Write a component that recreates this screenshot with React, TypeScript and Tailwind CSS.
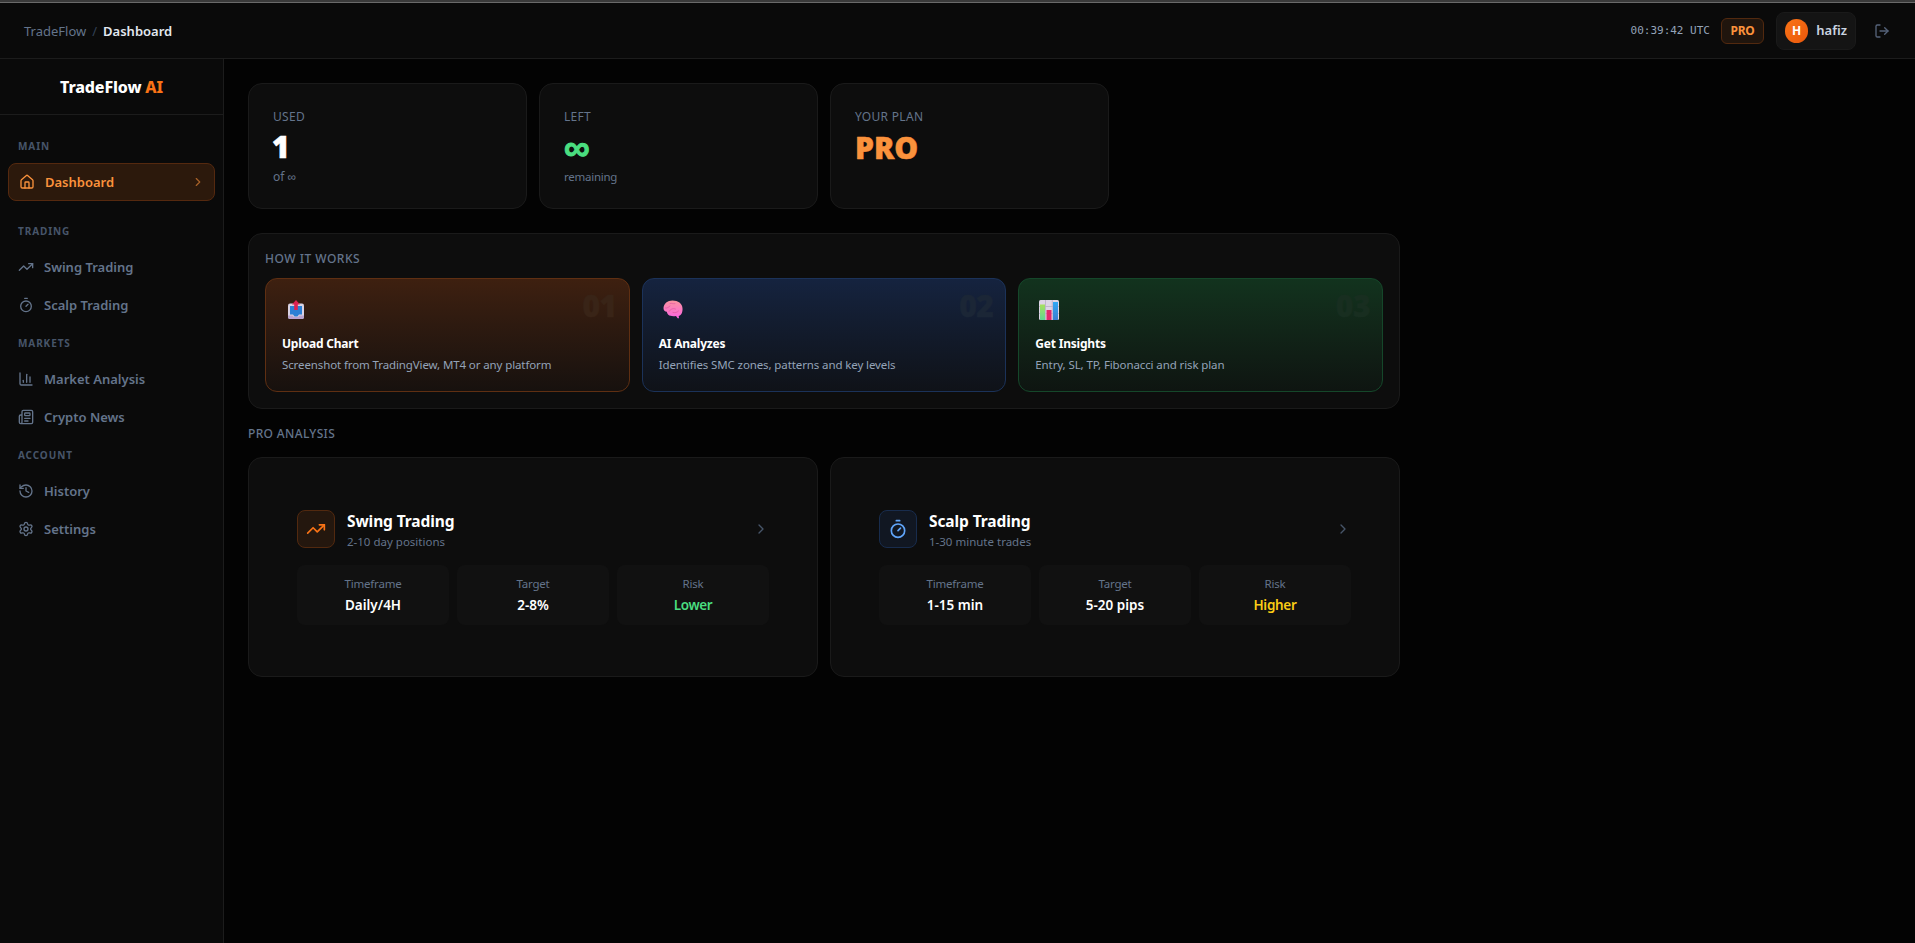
import type { ReactNode } from "react";
import {
  ChartColumn,
  ChevronRight,
  History,
  House,
  LogOut,
  Newspaper,
  Settings,
  Timer,
  TrendingUp,
  type LucideIcon,
} from "lucide-react";

type NavItem = { label: string; icon: LucideIcon; active?: boolean };

const NAV: { title: string; items: NavItem[] }[] = [
  { title: "Main", items: [{ label: "Dashboard", icon: House, active: true }] },
  {
    title: "Trading",
    items: [
      { label: "Swing Trading", icon: TrendingUp },
      { label: "Scalp Trading", icon: Timer },
    ],
  },
  {
    title: "Markets",
    items: [
      { label: "Market Analysis", icon: ChartColumn },
      { label: "Crypto News", icon: Newspaper },
    ],
  },
  {
    title: "Account",
    items: [
      { label: "History", icon: History },
      { label: "Settings", icon: Settings },
    ],
  },
];

function OutboxIcon() {
  return (
    <svg width="16" height="20" viewBox="0 0 16 20">
      <rect x="0" y="3.5" width="16" height="15.5" rx="2" fill="#d9d2e3" />
      <path d="M0 15.5h4.5l1.5 1.5h4l1.5-1.5H16V17a2 2 0 0 1-2 2H2a2 2 0 0 1-2-2z" fill="#b9a3cf" />
      <path d="M2 6h12v8.5h-3l-1.5 2h-3l-1.5-2H2z" fill="#2b7fd4" />
      <path d="M8 0l4 4.5H9.8V10H6.2V4.5H4z" fill="#dc2150" />
    </svg>
  );
}

function BrainIcon() {
  return (
    <svg width="20" height="19" viewBox="0 0 20 19">
      <defs>
        <linearGradient id="brain" x1="0" y1="0" x2="0" y2="1">
          <stop offset="0" stopColor="#f9939f" />
          <stop offset="1" stopColor="#fb63e0" />
        </linearGradient>
      </defs>
      <path
        d="M.5 8C.8 3.5 4.500.6 9.500.5c5.500 0 9.800 3 10 7.800.2 2.200-.2 4.700-1.500 6.200-.6.8-1.500 1.200-2.300 1.400l.3 2.300-1.300.1-1.700-2.300c-2.500.4-6 .3-7.700-1.200-1-.9-1.200-2-1.500-3C2 11.500.3 10.500.5 8z"
        fill="url(#brain)"
      />
      <path
        d="M2.500 8c2 .5 3-1 4.500-2M7 3.500c2-.8 3 .8 5 .2M6 11.500c1.500-2.500 4-3.500 6.500-2.500M10 12.500c2 .5 4 0 5.500-1.500"
        fill="none"
        stroke="#e0589f"
        strokeWidth=".7"
        strokeLinecap="round"
      />
    </svg>
  );
}

function BarsIcon() {
  return (
    <svg width="20" height="20" viewBox="0 0 20 20">
      <defs>
        <linearGradient id="bar-green" x1="0" y1="0" x2="0" y2="1">
          <stop offset="0" stopColor="#a8e05f" />
          <stop offset="1" stopColor="#5fd494" />
        </linearGradient>
        <linearGradient id="bar-blue" x1="0" y1="0" x2="0" y2="1">
          <stop offset="0" stopColor="#2fa8f5" />
          <stop offset="1" stopColor="#3b7dd0" />
        </linearGradient>
      </defs>
      <rect width="20" height="20" rx="1.5" fill="#ddd5e6" />
      <path d="M0 6.5h20M0 13.5h20M6.5 0v20M13.3 0v20" stroke="#b9adc6" strokeWidth=".8" />
      <rect x="1" y="4.5" width="5" height="15.5" fill="url(#bar-green)" />
      <rect x="7.5" y="10" width="5" height="10" fill="#e3276c" />
      <rect x="14" y="2" width="5" height="18" fill="url(#bar-blue)" />
    </svg>
  );
}

const STEPS = [
  {
    num: "01",
    title: "Upload Chart",
    desc: "Screenshot from TradingView, MT4 or any platform",
    icon: <OutboxIcon />,
    box: "border-[#5f2f12] from-[#3e2010] to-[#17110e]",
    numColor: "text-[#392417]",
  },
  {
    num: "02",
    title: "AI Analyzes",
    desc: "Identifies SMC zones, patterns and key levels",
    icon: <BrainIcon />,
    box: "border-[#1b3259] from-[#15233f] to-[#0f1218]",
    numColor: "text-[#1b2636]",
  },
  {
    num: "03",
    title: "Get Insights",
    desc: "Entry, SL, TP, Fibonacci and risk plan",
    icon: <BarsIcon />,
    box: "border-[#15472a] from-[#12331e] to-[#0e1511]",
    numColor: "text-[#182e20]",
  },
];

const MODES = [
  {
    title: "Swing Trading",
    sub: "2-10 day positions",
    icon: TrendingUp,
    iconBox: "border-[#52290f] bg-[#24170e] text-[#f97316]",
    stats: [
      { label: "Timeframe", value: "Daily/4H", color: "text-white" },
      { label: "Target", value: "2-8%", color: "text-white" },
      { label: "Risk", value: "Lower", color: "text-[#4ade80] tracking-[-0.4px]" },
    ],
  },
  {
    title: "Scalp Trading",
    sub: "1-30 minute trades",
    icon: Timer,
    iconBox: "border-[#182c4d] bg-[#111722] text-[#60a5fa]",
    stats: [
      { label: "Timeframe", value: "1-15 min", color: "text-white" },
      { label: "Target", value: "5-20 pips", color: "text-white" },
      { label: "Risk", value: "Higher", color: "text-[#facc15] tracking-[-0.3px]" },
    ],
  },
];

function StatCard({ label, children }: { label: string; children: ReactNode }) {
  return (
    <div className="h-[126px] rounded-[14px] border border-[#1a1a1a] bg-[#0d0d0d] px-6 pt-[25px]">
      <p className="mb-1 text-[12px] leading-4 uppercase tracking-[0.3px] text-[#64748b]">{label}</p>
      {children}
    </div>
  );
}

export default function App() {
  return (
    <div className="flex h-screen flex-col overflow-hidden bg-[#030303] font-['Noto_Sans',sans-serif] text-white">
      <div className="h-[3px] shrink-0 border-b border-[#6a6a6a] bg-[#3a3a3a]" />

      <header className="flex h-14 shrink-0 items-center justify-between border-b border-[#1c1c1c] bg-[#0a0a0a] pl-6 pr-[25px]">
        <div className="flex items-center gap-[6px] pt-0.5 text-[13px]">
          <span className="text-[#64748b]">TradeFlow</span>
          <span className="text-[#334155]">/</span>
          <span className="font-semibold text-[#e2e8f0]">Dashboard</span>
        </div>
        <div className="flex items-center gap-3">
          <span className="-mr-px pt-0.5 font-['DejaVu_Sans_Mono',monospace] text-[11px] text-[#94a3b8]">00:39:42 UTC</span>
          <span className="flex h-[26px] w-[43px] items-center justify-center rounded-md border border-[#52290f] bg-[#20150d] pt-px text-xs font-bold tracking-[-0.2px] text-[#fb923c]">
            PRO
          </span>
          <div className="flex h-[38px] w-20 items-center gap-2 rounded-lg border border-[#1a1a1a] bg-[#141414] px-2">
            <div className="flex size-6 items-center justify-center rounded-full bg-gradient-to-br from-[#f97316] to-[#ea580c] pt-px text-xs font-bold">
              H
            </div>
            <span className="pt-px text-[13px] font-semibold text-[#cbd5e1]">hafiz</span>
          </div>
          <LogOut className="ml-1.5 size-4 text-[#56637a]" />
        </div>
      </header>

      <div className="flex min-h-0 flex-1">
        <aside className="w-56 shrink-0 border-r border-[#1c1c1c] bg-[#0a0a0a]">
          <div className="flex h-14 items-center justify-center border-b border-[#1c1c1c] text-base font-extrabold tracking-[-0.15px]">
            <span>
              TradeFlow <span className="text-[#f97316]">AI</span>
            </span>
          </div>
          <nav className="px-2 pt-3">
            {NAV.map((group) => (
              <div key={group.title} className="first:mb-[11px]">
                <p className="flex h-9 items-center pl-2.5 pt-0.5 text-[10px] font-bold uppercase tracking-[0.9px] text-[#475569]">
                  {group.title}
                </p>
                {group.items.map(({ label, icon: Icon, active }) =>
                  active ? (
                    <a
                      key={label}
                      className="flex h-[38px] items-center gap-2.5 rounded-lg border border-[#55290f] bg-[#2c190c] pl-2.5 pr-[9px] text-[13px] font-semibold text-[#fb923c]"
                    >
                      <Icon className="size-4" />
                      <span className="flex-1 pt-px">{label}</span>
                      <ChevronRight className="size-3.5 opacity-60" />
                    </a>
                  ) : (
                    <a key={label} className="flex h-[38px] items-center gap-2.5 px-2.5 text-[13px] font-semibold text-[#64748b]">
                      <Icon className="size-4" />
                      <span className="pt-px">{label}</span>
                    </a>
                  )
                )}
              </div>
            ))}
          </nav>
        </aside>

        <main className="flex-1 p-6">
          <div className="max-w-6xl">
            <div className="mb-6 grid grid-cols-4 gap-3">
              <StatCard label="Used">
                <p className="-ml-px mb-1 text-3xl font-black leading-9 [-webkit-text-stroke:0.6px]">1</p>
                <p className="text-[12px] leading-4 text-[#64748b]">of ∞</p>
              </StatCard>
              <StatCard label="Left">
                <p className="mb-1 text-[36px] font-black leading-9 text-[#4ade80] [-webkit-text-stroke:1px]">∞</p>
                <p className="text-[11.5px] leading-4 tracking-[-0.25px] text-[#64748b]">remaining</p>
              </StatCard>
              <StatCard label="Your Plan">
                <p className="text-3xl font-black leading-[37px] text-[#fb923c] [-webkit-text-stroke:0.5px]">PRO</p>
              </StatCard>
            </div>

            <section className="mb-4 rounded-[14px] border border-[#1a1a1a] bg-[#0d0d0d] p-4">
              <h2 className="mb-[11px] pt-px text-xs font-medium uppercase leading-4 tracking-[0.5px] text-[#64748b]">
                How it works
              </h2>
              <div className="grid grid-cols-3 gap-3">
                {STEPS.map((step) => (
                  <div key={step.num} className={`relative h-[114px] rounded-xl border bg-gradient-to-b p-4 ${step.box}`}>
                    <span
                      className={`absolute right-3 top-[11px] text-3xl font-black leading-8 tracking-[-0.5px] [-webkit-text-stroke:0.5px] ${step.numColor}`}
                    >
                      {step.num}
                    </span>
                    <div className="mb-2 flex h-[31px] w-7 items-center justify-center pb-0.5">{step.icon}</div>
                    <p className="text-xs font-bold leading-5 tracking-[-0.2px]">{step.title}</p>
                    <p className="text-[11.5px] leading-[21px] tracking-[-0.11px] text-[#94a3b8]">{step.desc}</p>
                  </div>
                ))}
              </div>
            </section>

            <h2 className="mb-[15px] pt-px text-xs font-medium uppercase leading-4 tracking-[0.35px] text-[#64748b]">
              Pro Analysis
            </h2>
            <div className="grid grid-cols-2 gap-3">
              {MODES.map(({ title, sub, icon: Icon, iconBox, stats }) => (
                <div
                  key={title}
                  className="flex h-[220px] flex-col justify-center rounded-[14px] border border-[#1a1a1a] bg-[#0d0d0d] px-12"
                >
                  <div className="mb-4 flex h-10 items-center gap-3">
                    <div className={`flex size-[38px] items-center justify-center rounded-lg border ${iconBox}`}>
                      <Icon className="size-5" />
                    </div>
                    <div className="flex-1">
                      <h3 className="text-[15.5px] font-bold leading-6 tracking-[-0.1px]">{title}</h3>
                      <p className="pt-px text-[11.5px] leading-4 text-[#64748b]">{sub}</p>
                    </div>
                    <ChevronRight className="size-4 text-[#475569]" />
                  </div>
                  <div className="grid grid-cols-3 gap-2">
                    {stats.map((stat) => (
                      <div key={stat.label} className="h-[60px] rounded-lg bg-[#111111] pt-[11px] text-center">
                        <p className="mb-[3px] text-[11.5px] leading-4 tracking-[-0.2px] text-[#64748b]">{stat.label}</p>
                        <p className={`text-[13.5px] font-semibold leading-5 ${stat.color}`}>{stat.value}</p>
                      </div>
                    ))}
                  </div>
                </div>
              ))}
            </div>
          </div>
        </main>
      </div>
    </div>
  );
}
